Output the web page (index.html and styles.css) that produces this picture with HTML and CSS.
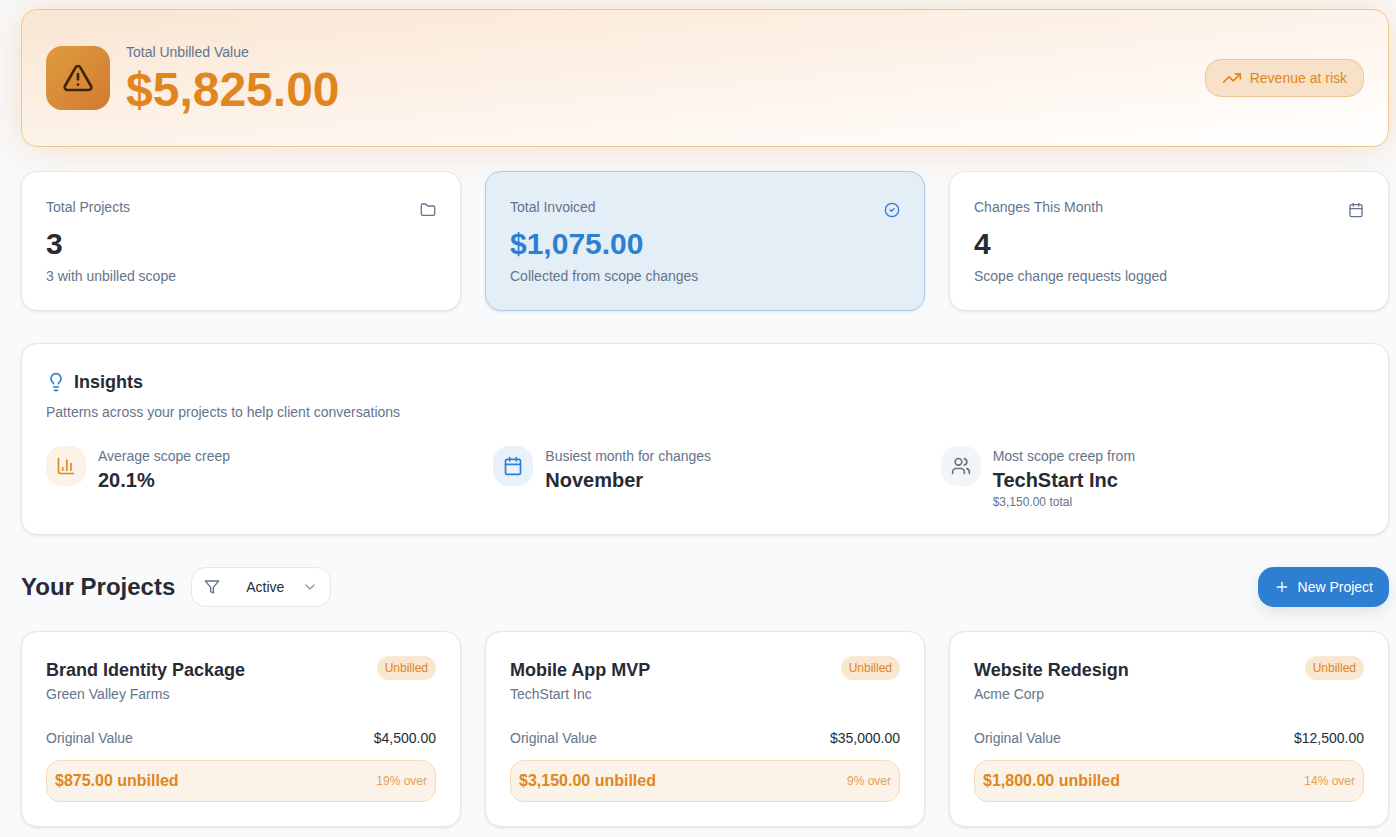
FILE: index.html
```html
<!DOCTYPE html>
<html lang="en">
<head>
<meta charset="utf-8">
<meta name="viewport" content="width=device-width, initial-scale=1">
<title>Dashboard</title>
<link rel="stylesheet" href="styles.css">
</head>
<body>
<main class="page">
  <section class="hero">
    <div class="hero-main">
      <div class="hero-icon">
        <svg class="icon icon-lg" viewBox="0 0 24 24" aria-hidden="true"><path d="m21.73 18-8-14a2 2 0 0 0-3.48 0l-8 14A2 2 0 0 0 4 21h16a2 2 0 0 0 1.73-3"/><path d="M12 9v4"/><path d="M12 17h.01"/></svg>
      </div>
      <div class="hero-text">
        <p class="muted">Total Unbilled Value</p>
        <p class="hero-value">$5,825.00</p>
      </div>
    </div>
    <div class="risk-pill">
      <svg class="icon icon-md" viewBox="0 0 24 24" aria-hidden="true"><path d="M16 7h6v6"/><path d="m22 7-8.5 8.5-5-5L2 17"/></svg>
      <span>Revenue at risk</span>
    </div>
  </section>

  <section class="stats">
    <article class="card">
      <div class="stat-head">
        <h3 class="stat-label">Total Projects</h3>
        <svg class="icon icon-sm" viewBox="0 0 24 24" aria-hidden="true"><path d="M20 20a2 2 0 0 0 2-2V8a2 2 0 0 0-2-2h-7.9a2 2 0 0 1-1.69-.9L9.6 3.9A2 2 0 0 0 7.93 3H4a2 2 0 0 0-2 2v13a2 2 0 0 0 2 2Z"/></svg>
      </div>
      <p class="stat-value">3</p>
      <p class="muted">3 with unbilled scope</p>
    </article>
    <article class="card card-blue">
      <div class="stat-head">
        <h3 class="stat-label">Total Invoiced</h3>
        <svg class="icon icon-sm" viewBox="0 0 24 24" aria-hidden="true"><circle cx="12" cy="12" r="10"/><path d="m9 12 2 2 4-4"/></svg>
      </div>
      <p class="stat-value">$1,075.00</p>
      <p class="muted">Collected from scope changes</p>
    </article>
    <article class="card">
      <div class="stat-head">
        <h3 class="stat-label">Changes This Month</h3>
        <svg class="icon icon-sm" viewBox="0 0 24 24" aria-hidden="true"><path d="M8 2v4"/><path d="M16 2v4"/><rect width="18" height="18" x="3" y="4" rx="2"/><path d="M3 10h18"/></svg>
      </div>
      <p class="stat-value">4</p>
      <p class="muted">Scope change requests logged</p>
    </article>
  </section>

  <section class="card insights">
    <h2 class="insights-title">
      <svg class="icon icon-md" viewBox="0 0 24 24" aria-hidden="true"><path d="M15 14c.2-1 .7-1.7 1.5-2.5 1-.9 1.5-2.2 1.5-3.5A6 6 0 0 0 6 8c0 1 .2 2.2 1.5 3.5.7.7 1.3 1.5 1.5 2.5"/><path d="M9 18h6"/><path d="M10 22h4"/></svg>
      <span>Insights</span>
    </h2>
    <p class="muted insights-desc">Patterns across your projects to help client conversations</p>
    <div class="insights-grid">
      <div class="insight">
        <div class="tile tile-orange">
          <svg class="icon icon-md" viewBox="0 0 24 24" aria-hidden="true"><path d="M3 3v16a2 2 0 0 0 2 2h16"/><path d="M18 17V9"/><path d="M13 17V5"/><path d="M8 17v-3"/></svg>
        </div>
        <div>
          <p class="muted">Average scope creep</p>
          <p class="insight-value">20.1%</p>
        </div>
      </div>
      <div class="insight">
        <div class="tile tile-blue">
          <svg class="icon icon-md" viewBox="0 0 24 24" aria-hidden="true"><path d="M8 2v4"/><path d="M16 2v4"/><rect width="18" height="18" x="3" y="4" rx="2"/><path d="M3 10h18"/></svg>
        </div>
        <div>
          <p class="muted">Busiest month for changes</p>
          <p class="insight-value">November</p>
        </div>
      </div>
      <div class="insight">
        <div class="tile tile-gray">
          <svg class="icon icon-md" viewBox="0 0 24 24" aria-hidden="true"><path d="M16 21v-2a4 4 0 0 0-4-4H6a4 4 0 0 0-4 4v2"/><circle cx="9" cy="7" r="4"/><path d="M22 21v-2a4 4 0 0 0-3-3.87"/><path d="M16 3.13a4 4 0 0 1 0 7.75"/></svg>
        </div>
        <div>
          <p class="muted">Most scope creep from</p>
          <p class="insight-value">TechStart Inc</p>
          <p class="insight-note">$3,150.00 total</p>
        </div>
      </div>
    </div>
  </section>

  <section class="projects">
    <div class="projects-bar">
      <div class="projects-heading">
        <h2 class="projects-title">Your Projects</h2>
        <div class="filter">
          <select class="filter-select" aria-label="Filter projects">
            <option>Active</option>
            <option>Completed</option>
            <option>All</option>
          </select>
          <svg class="icon icon-sm filter-funnel" viewBox="0 0 24 24" aria-hidden="true"><path d="M22 3H2l8 9.46V19l4 2v-8.54Z"/></svg>
          <svg class="icon icon-sm filter-chevron" viewBox="0 0 24 24" aria-hidden="true"><path d="m6 9 6 6 6-6"/></svg>
        </div>
      </div>
      <button class="new-button" type="button">
        <svg class="icon icon-sm" viewBox="0 0 24 24" aria-hidden="true"><path d="M5 12h14"/><path d="M12 5v14"/></svg>
        <span>New Project</span>
      </button>
    </div>
    <div class="project-grid">
      <article class="card">
        <div class="project-head">
          <div>
            <h3 class="project-name">Brand Identity Package</h3>
            <p class="muted">Green Valley Farms</p>
          </div>
          <span class="badge">Unbilled</span>
        </div>
        <div class="value-row"><span class="muted">Original Value</span><span>$4,500.00</span></div>
        <div class="unbilled"><span class="unbilled-amount">$875.00 unbilled</span><span class="unbilled-over">19% over</span></div>
      </article>
      <article class="card">
        <div class="project-head">
          <div>
            <h3 class="project-name">Mobile App MVP</h3>
            <p class="muted">TechStart Inc</p>
          </div>
          <span class="badge">Unbilled</span>
        </div>
        <div class="value-row"><span class="muted">Original Value</span><span>$35,000.00</span></div>
        <div class="unbilled"><span class="unbilled-amount">$3,150.00 unbilled</span><span class="unbilled-over">9% over</span></div>
      </article>
      <article class="card">
        <div class="project-head">
          <div>
            <h3 class="project-name">Website Redesign</h3>
            <p class="muted">Acme Corp</p>
          </div>
          <span class="badge">Unbilled</span>
        </div>
        <div class="value-row"><span class="muted">Original Value</span><span>$12,500.00</span></div>
        <div class="unbilled"><span class="unbilled-amount">$1,800.00 unbilled</span><span class="unbilled-over">14% over</span></div>
      </article>
    </div>
  </section>
</main>
</body>
</html>
```
FILE: styles.css
```css
:root {
  --bg: #f9fafc;
  --ink: #272b34;
  --muted: #64748b;
  --line: #e4e7ec;
  --blue: #2d7fd3;
  --orange: #e08620;
}

*, *::before, *::after { box-sizing: border-box; }

body {
  margin: 0;
  background: var(--bg);
  color: var(--ink);
  font-family: "Liberation Sans", Arial, sans-serif;
  font-size: 14px;
  line-height: 20px;
}

h2, h3, p { margin: 0; }

.page { padding: 9px 7px 10px 21px; }

.muted { color: var(--muted); }

.icon {
  display: block;
  flex: none;
  fill: none;
  stroke: currentColor;
  stroke-width: 2;
  stroke-linecap: round;
  stroke-linejoin: round;
}
.icon-sm { width: 16px; height: 16px; }
.icon-md { width: 20px; height: 20px; }
.icon-lg { width: 32px; height: 32px; }

.card {
  padding: 24px;
  background: #fff;
  border: 1px solid var(--line);
  border-radius: 16px;
  box-shadow: 0 1px 3px rgba(15, 23, 42, 0.1);
}

/* Hero */
.hero {
  display: flex;
  align-items: center;
  justify-content: space-between;
  padding: 32px 24px;
  border: 1px solid #f0c690;
  border-radius: 16px;
  background: linear-gradient(to bottom right, #f9e6d2, #fef5ee 60%, #fff);
  box-shadow: 0 0 40px rgba(224, 134, 32, 0.25);
}
.hero-main { display: flex; align-items: center; gap: 16px; }
.hero-icon {
  display: flex;
  align-items: center;
  justify-content: center;
  width: 64px;
  height: 64px;
  border-radius: 16px;
  background: linear-gradient(135deg, #de9d3c, #d27a33);
  color: #40240a;
}
.hero-value {
  margin-top: 4px;
  color: var(--orange);
  font-size: 48px;
  font-weight: 700;
  line-height: 48px;
}
.risk-pill {
  display: flex;
  align-items: center;
  gap: 8px;
  padding: 8px 16px;
  border: 1px solid #efc594;
  border-radius: 16px;
  background: #f7e1c8;
  color: var(--orange);
}

/* Stats */
.stats, .project-grid {
  display: grid;
  grid-template-columns: repeat(3, 1fr);
  gap: 24px;
}
.stats { margin-top: 24px; }
.stat-head {
  display: flex;
  align-items: flex-end;
  justify-content: space-between;
  color: var(--muted);
}
.stat-label { font-size: 14px; font-weight: 400; line-height: 22px; }
.stat-value { margin: 8px 0 4px; font-size: 30px; font-weight: 700; line-height: 36px; }
.card-blue { background: #e4eef7; border-color: #abcbeb; }
.card-blue .stat-value, .card-blue .icon { color: var(--blue); }

/* Insights */
.insights { margin-top: 32px; }
.insights-title {
  display: flex;
  align-items: center;
  gap: 8px;
  font-size: 18px;
  line-height: 28px;
}
.insights-title .icon { color: var(--blue); }
.insights-desc { margin-top: 6px; }
.insights-grid {
  display: grid;
  grid-template-columns: repeat(3, 1fr);
  gap: 24px;
  margin-top: 24px;
}
.insight { display: flex; align-items: flex-start; gap: 12px; }
.tile { padding: 10px; border-radius: 16px; }
.tile-orange { background: #fcf3e8; color: var(--orange); }
.tile-blue { background: #e9f1fa; color: var(--blue); }
.tile-gray { background: #f3f5f7; color: var(--muted); }
.insight-value { font-size: 20px; font-weight: 700; line-height: 28px; }
.insight-note { color: var(--muted); font-size: 12px; line-height: 16px; }

/* Projects */
.projects { margin-top: 32px; }
.projects-bar {
  display: flex;
  align-items: center;
  justify-content: space-between;
  margin-bottom: 24px;
}
.projects-heading { display: flex; align-items: center; gap: 16px; }
.projects-title { font-size: 24px; line-height: 32px; }
.filter { position: relative; }
.filter-select {
  display: block;
  appearance: none;
  width: 140px;
  height: 40px;
  padding: 0 32px 0 54px;
  border: 1px solid var(--line);
  border-radius: 14px;
  background: #fff;
  color: var(--ink);
  font: inherit;
}
.filter-funnel, .filter-chevron {
  position: absolute;
  top: 12px;
  pointer-events: none;
  color: var(--muted);
}
.filter-funnel { left: 13px; }
.filter-chevron { right: 13px; color: #94969a; }
.new-button {
  display: flex;
  align-items: center;
  gap: 8px;
  height: 40px;
  padding: 0 16px;
  border: 0;
  border-radius: 16px;
  background: var(--blue);
  box-shadow: 0 6px 16px rgba(30, 30, 30, 0.1);
  color: #fff;
  font: inherit;
}
.project-head {
  display: flex;
  align-items: flex-start;
  justify-content: space-between;
}
.project-name { font-size: 18px; line-height: 28px; }
.badge {
  padding: 4px 8px;
  border-radius: 12px;
  background: #f9e7d2;
  color: var(--orange);
  font-size: 12px;
  line-height: 16px;
}
.value-row {
  display: flex;
  justify-content: space-between;
  margin: 24px 0 12px;
}
.unbilled {
  display: flex;
  align-items: center;
  justify-content: space-between;
  padding: 8px;
  border: 1px solid #f6dcbc;
  border-radius: 14px;
  background: #fcf3e8;
  color: var(--orange);
}
.unbilled-amount { font-size: 16px; font-weight: 700; line-height: 24px; }
.unbilled-over { color: #e69e4d; font-size: 12px; line-height: 16px; }
```
